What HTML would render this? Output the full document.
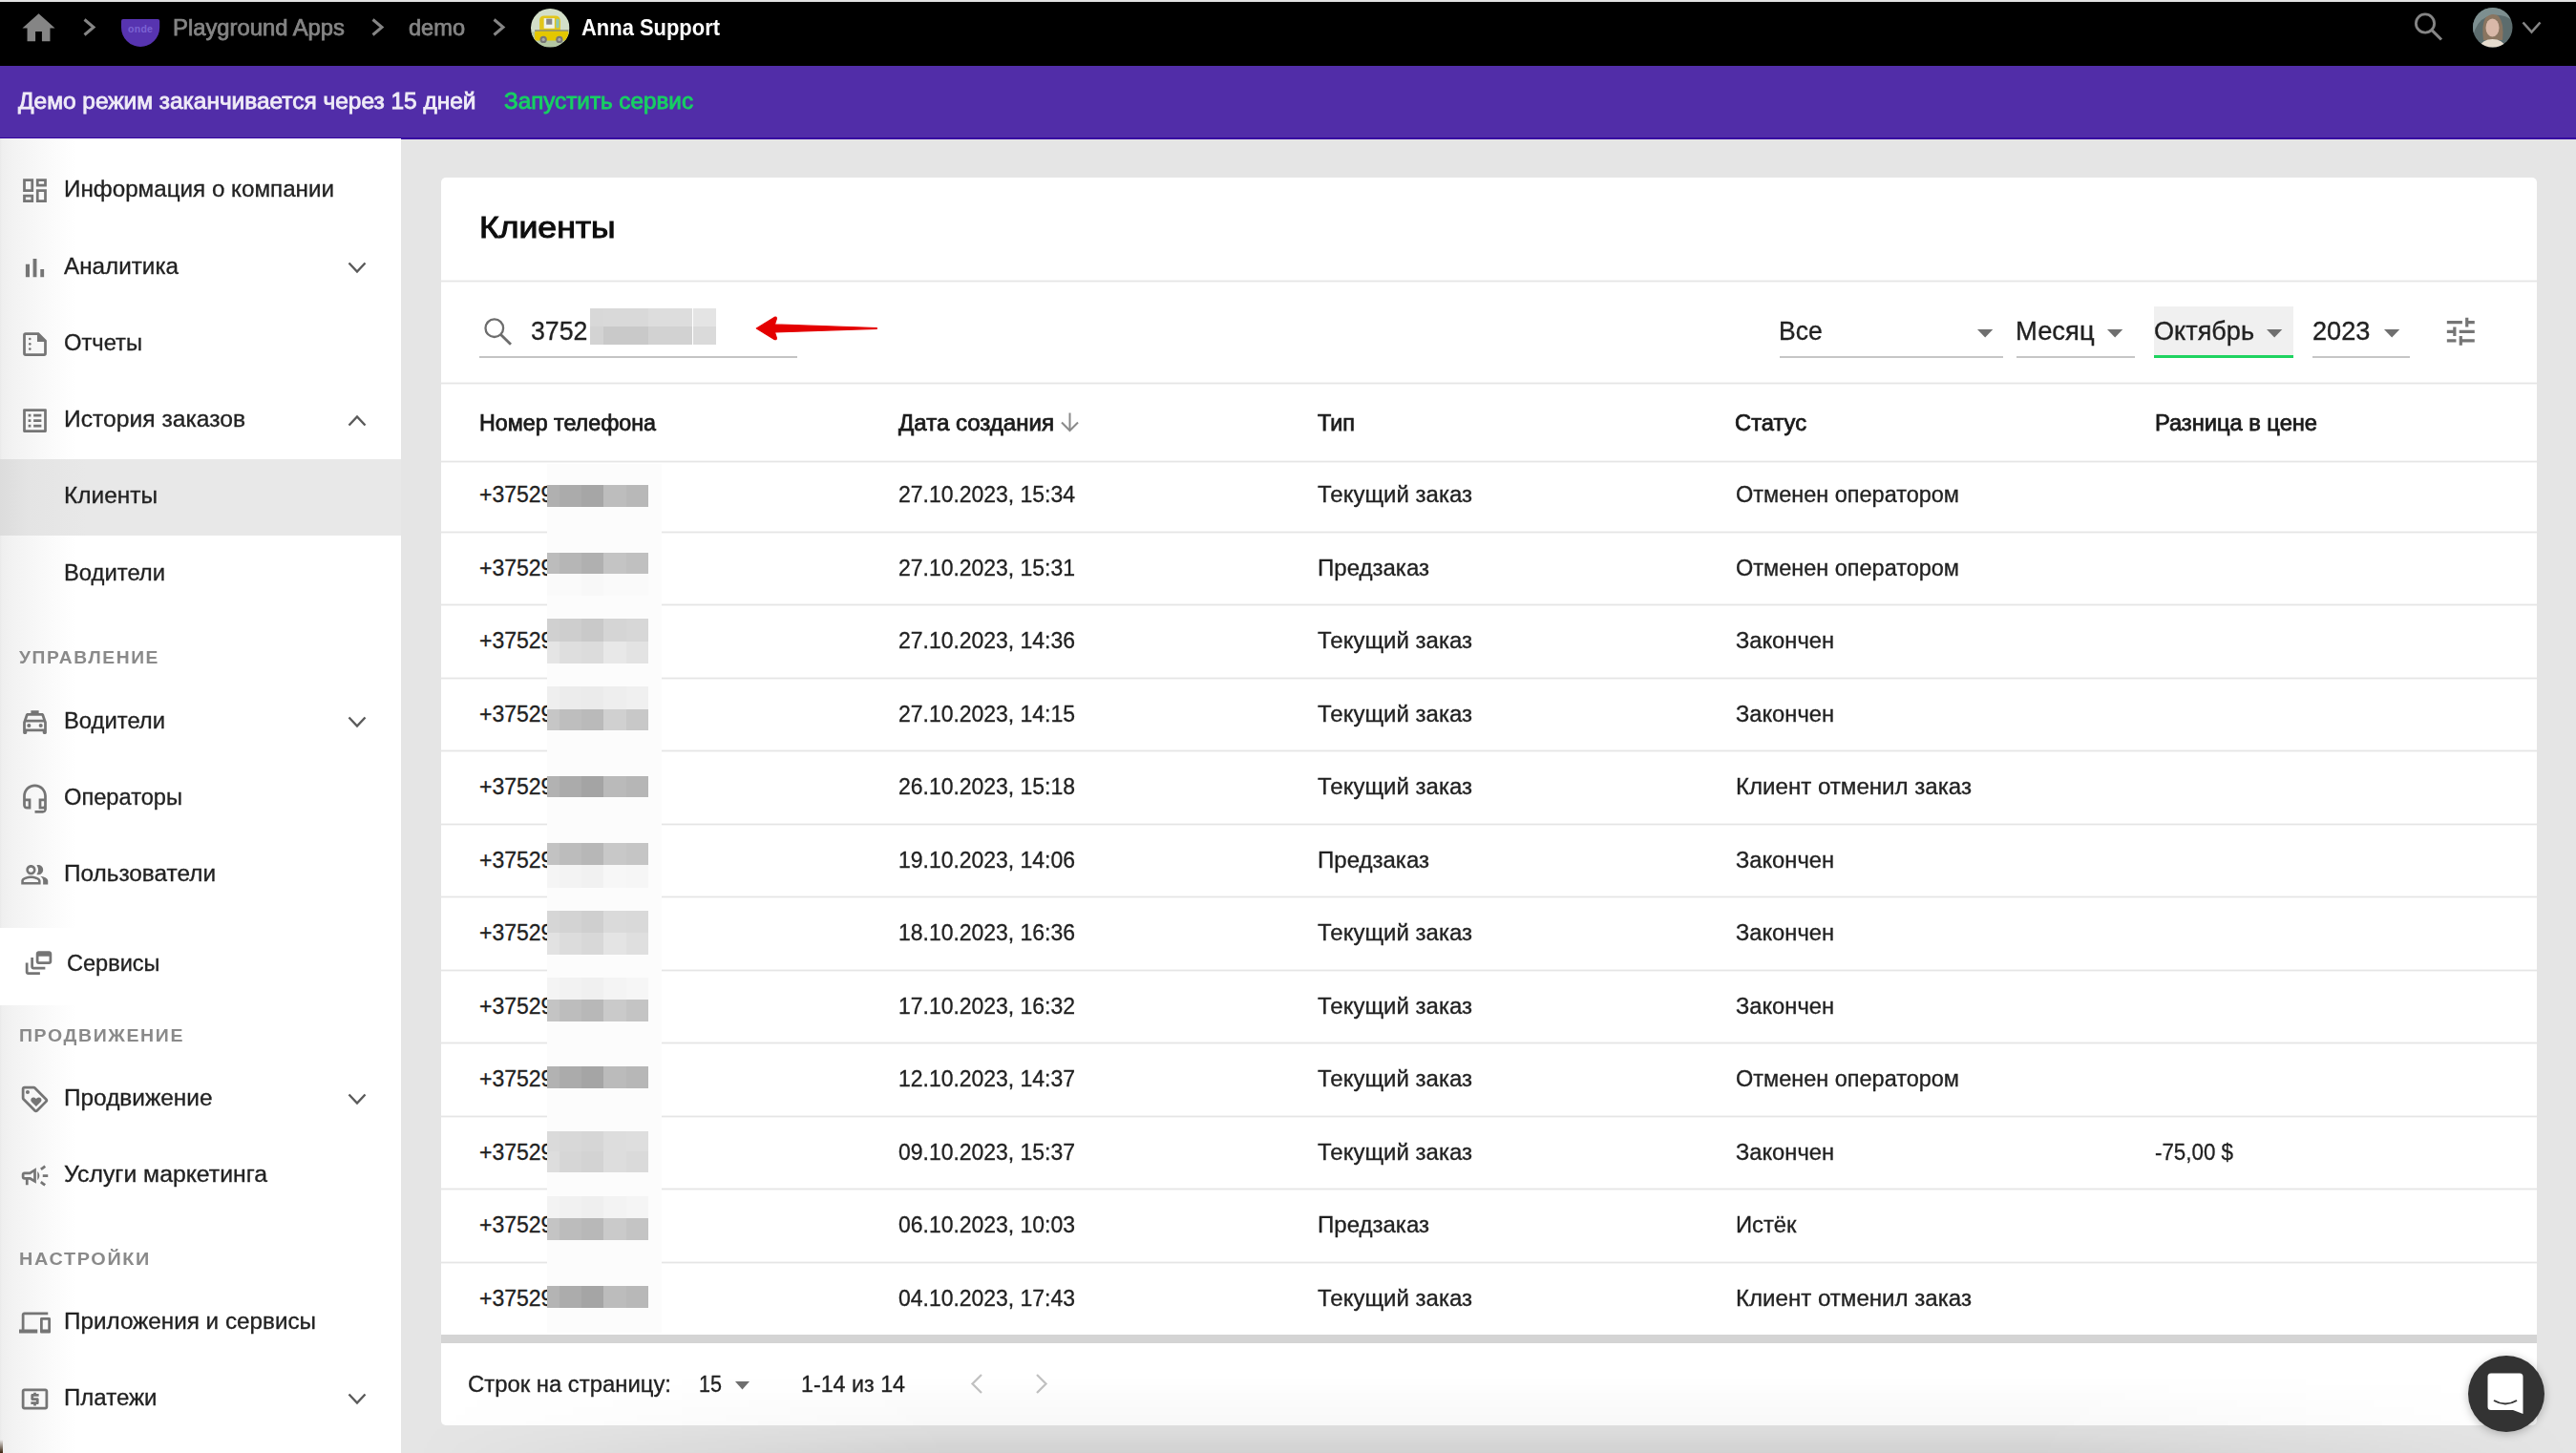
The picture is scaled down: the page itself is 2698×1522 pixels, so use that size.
<!DOCTYPE html>
<html><head><meta charset="utf-8"><style>
html,body{margin:0;padding:0;}
body{width:2698px;height:1522px;position:relative;overflow:hidden;font-family:"Liberation Sans", sans-serif;background:#e5e5e5;}
.t{position:absolute;white-space:nowrap;line-height:1;transform-origin:0 50%;}
.r{position:absolute;}
svg.r{overflow:visible;}
</style></head><body>
<div class="r" style="left:0px;top:0px;width:2698px;height:1522px;background:#e5e5e5;"></div>
<div class="r" style="left:0px;top:0px;width:2698px;height:2px;background:#e2e2e2;"></div>
<div class="r" style="left:0px;top:2px;width:2698px;height:66.5px;background:#000;"></div>
<div class="r" style="left:0px;top:68.5px;width:2698px;height:76px;background:#512da8;"></div>
<div class="r" style="left:0px;top:143.5px;width:2698px;height:2px;background:#3606a0;"></div>
<div class="r" style="left:0px;top:145px;width:420px;height:1377px;background:linear-gradient(to right,#e9e9e9 0px,#efefef 2px,#f2f2f2 12px,#f6f6f6 30px,#fbfbfb 55px,#fff 80px);"></div>
<svg class="r" style="left:19.5px;top:9px;" width="41" height="41" viewBox="0 0 24 24"><path fill="#858585" d="M10 20v-6h4v6h5v-8h3L12 3 2 12h3v8z"/></svg>
<svg class="r" style="left:87px;top:19px;" width="13" height="19" viewBox="0 0 13 19"><polyline points="1.5,1.5 11,9.5 1.5,17.5" fill="none" stroke="#858585" stroke-width="3"/></svg>
<svg class="r" style="left:127.2px;top:20.3px;" width="40.2" height="29" viewBox="0 0 40.2 29"><path d="M0 2 Q0 0 2 0 H38.2 Q40.2 0 40.2 2 V8.8 A20.1 20.1 0 0 1 0 8.8 Z" fill="#5734b0"/><text x="20.1" y="13.8" font-size="10.5" font-weight="700" fill="#7b62d2" text-anchor="middle" font-family="Liberation Sans" letter-spacing="0.3">onde</text></svg>
<div class="t" id="t1" style="left:181.00px;top:16.58px;font-size:24px;color:#858585;font-weight:400;-webkit-text-stroke:0.75px #858585;transform:scaleX(0.9919);">Playground Apps</div>
<svg class="r" style="left:389px;top:19px;" width="13" height="19" viewBox="0 0 13 19"><polyline points="1.5,1.5 11,9.5 1.5,17.5" fill="none" stroke="#858585" stroke-width="3"/></svg>
<div class="t" id="t2" style="left:428.00px;top:16.58px;font-size:24px;color:#858585;font-weight:400;-webkit-text-stroke:0.75px #858585;transform:scaleX(0.9826);">demo</div>
<svg class="r" style="left:516px;top:19px;" width="13" height="19" viewBox="0 0 13 19"><polyline points="1.5,1.5 11,9.5 1.5,17.5" fill="none" stroke="#858585" stroke-width="3"/></svg>
<svg class="r" style="left:555.5px;top:8.5px;" width="40.5" height="40.5" viewBox="0 0 40 40"><defs><clipPath id="anc"><circle cx="20" cy="20" r="20"/></clipPath></defs><g clip-path="url(#anc)"><rect width="40" height="40" fill="#d3dfc8"/><rect y="24" width="40" height="16" fill="#b3c6a3"/><path d="M9 23 V12 Q9 7.5 14 7.5 H25 Q30.5 7.5 30.5 13 V23 Z" fill="#e2c619"/><rect x="13.5" y="10" width="11" height="10.5" fill="#eef3ea"/><rect x="16" y="10.5" width="6" height="6" fill="#888"/><rect x="26" y="10.5" width="3.3" height="9.5" rx="1" fill="#8cc7b4"/><rect x="4" y="22" width="35" height="1.6" fill="#8a8a70"/><rect x="4" y="23.5" width="35" height="9.5" rx="1.5" fill="#e4c700"/><circle cx="13" cy="32" r="3.6" fill="#777"/><circle cx="29.5" cy="32" r="3.6" fill="#777"/><circle cx="13" cy="32" r="1.6" fill="#aaa"/><circle cx="29.5" cy="32" r="1.6" fill="#aaa"/></g></svg>
<div class="t" id="t3" style="left:609.00px;top:16.58px;font-size:24px;color:#fff;font-weight:700;transform:scaleX(0.9139);">Anna Support</div>
<svg class="r" style="left:2520px;top:5px;" width="42" height="42" viewBox="0 0 42 42"><circle cx="20" cy="19.5" r="9.6" fill="none" stroke="#858585" stroke-width="2.8"/><line x1="26.8" y1="26.3" x2="37" y2="36.5" stroke="#858585" stroke-width="3.1"/></svg>
<svg class="r" style="left:2590px;top:8px;" width="41.5" height="41.5" viewBox="0 0 41.5 41.5"><defs><clipPath id="avc"><circle cx="20.75" cy="20.75" r="20.75"/></clipPath></defs><g clip-path="url(#avc)"><rect width="42" height="42" fill="#5c6c6d"/><path d="M0 0 H42 V14 Q30 4 14 10 Q4 14 0 30 Z" fill="#7d8f90"/><path d="M11 34 Q9 18 13 11 Q20 4 27 9 Q33 16 31 34 Z" fill="#8a7560"/><ellipse cx="20.5" cy="21" rx="7" ry="9.5" fill="#d9b8a8"/><path d="M6 42 Q10 33 20.5 33 Q31 33 35 42 Z" fill="#e6dccf"/></g></svg>
<svg class="r" style="left:2641px;top:22px;" width="21" height="14" viewBox="0 0 21 14"><polyline points="1.5,1.5 10.5,11.5 19.5,1.5" fill="none" stroke="#858585" stroke-width="2.6"/></svg>
<div class="r" style="left:0;top:1508px;width:2.5px;height:14px;background:linear-gradient(to bottom,rgba(60,35,10,0),#3a2410);"></div>
<div class="t" id="t4" style="left:19.40px;top:94.15px;font-size:23.8px;color:#efebf7;font-weight:400;-webkit-text-stroke:0.85px #efebf7;transform:scaleX(1.0267);">Демо режим заканчивается через 15 дней</div>
<div class="t" id="t5" style="left:527.50px;top:94.35px;font-size:23.8px;color:#17d162;font-weight:400;-webkit-text-stroke:0.85px #17d162;transform:scaleX(1.0189);">Запустить сервис</div>
<div class="r" style="left:0px;top:481px;width:420px;height:80px;background:linear-gradient(to right,#dcdcdc 0px,#e4e4e4 30px,#e8e8e8 90px);"></div>
<div class="r" style="left:0px;top:971.5px;width:420px;height:81px;background:#ffffff;"></div>
<div class="t" id="t6" style="left:67.00px;top:187.23px;font-size:23px;color:#212121;font-weight:400;-webkit-text-stroke:0.3px #212121;transform:scaleX(1.0522);">Информация о компании</div>
<svg class="r" style="left:20.0px;top:183.0px;" width="33" height="33" viewBox="0 0 24 24"><g fill="#757575"><path d="M19 5v2h-4V5h4M9 5v6H5V5h4m10 8v6h-4v-6h4M9 17v2H5v-2h4M21 3h-8v6h8V3zM11 3H3v10h8V3zm10 8h-8v10h8V11zm-10 4H3v6h8v-6z"/></g></svg>
<div class="t" id="t7" style="left:67.00px;top:267.73px;font-size:23px;color:#212121;font-weight:400;-webkit-text-stroke:0.3px #212121;transform:scaleX(1.0541);">Аналитика</div>
<svg class="r" style="left:20.0px;top:263.5px;" width="33" height="33" viewBox="0 0 24 24"><g fill="#757575"><path d="M5 9.2h3V19H5zM10.6 5h2.8v14h-2.8zm5.6 8H19v6h-2.8z"/></g></svg>
<svg class="r" style="left:364px;top:273.5px;" width="20" height="13" viewBox="0 0 20 13"><polyline points="1.5,1.5 10,10.5 18.5,1.5" fill="none" stroke="#5a5a5a" stroke-width="2.4"/></svg>
<div class="t" id="t8" style="left:67.00px;top:348.23px;font-size:23px;color:#212121;font-weight:400;-webkit-text-stroke:0.3px #212121;transform:scaleX(1.0312);">Отчеты</div>
<svg class="r" style="left:20.0px;top:344.0px;" width="33" height="33" viewBox="0 0 24 24"><g fill="#757575"><path fill-rule="evenodd" d="M5 3 H15 L21 9 V19 Q21 21 19 21 H5 Q3 21 3 19 V5 Q3 3 5 3 Z M5 5 V19 H19 V10.2 H13.8 V5 Z"/><circle cx="8.2" cy="8" r="0.95"/><circle cx="8.2" cy="11.9" r="0.95"/><circle cx="8.2" cy="15.7" r="0.95"/></g></svg>
<div class="t" id="t9" style="left:67.00px;top:428.23px;font-size:23px;color:#212121;font-weight:400;-webkit-text-stroke:0.3px #212121;transform:scaleX(1.0715);">История заказов</div>
<svg class="r" style="left:20.0px;top:424.0px;" width="33" height="33" viewBox="0 0 24 24"><g fill="#757575"><path d="M11 7h6v2h-6zm0 4h6v2h-6zm0 4h6v2h-6zM7 7h2v2H7zm0 4h2v2H7zm0 4h2v2H7zM20.1 3H3.9c-.5 0-.9.4-.9.9v16.2c0 .4.4.9.9.9h16.2c.4 0 .9-.5.9-.9V3.9c0-.5-.5-.9-.9-.9zM19 19H5V5h14v14z"/></g></svg>
<svg class="r" style="left:364px;top:434px;" width="20" height="13" viewBox="0 0 20 13"><polyline points="1.5,11.5 10,2.5 18.5,11.5" fill="none" stroke="#5a5a5a" stroke-width="2.4"/></svg>
<div class="t" id="t10" style="left:67.00px;top:508.23px;font-size:23px;color:#212121;font-weight:400;-webkit-text-stroke:0.3px #212121;transform:scaleX(1.0625);">Клиенты</div>
<div class="t" id="t11" style="left:67.00px;top:588.73px;font-size:23px;color:#212121;font-weight:400;-webkit-text-stroke:0.3px #212121;transform:scaleX(1.0345);">Водители</div>
<div class="t" id="t12" style="left:67.00px;top:744.03px;font-size:23px;color:#212121;font-weight:400;-webkit-text-stroke:0.3px #212121;transform:scaleX(1.0345);">Водители</div>
<svg class="r" style="left:20.0px;top:739.8px;" width="33" height="33" viewBox="0 0 24 24"><g fill="#757575"><path d="M18.92 6.01C18.72 5.42 18.16 5 17.5 5H15V3H9v2H6.5c-.66 0-1.21.42-1.42 1.01L3 12v8c0 .55.45 1 1 1h1c.55 0 1-.45 1-1v-1h12v1c0 .55.45 1 1 1h1c.55 0 1-.45 1-1v-8l-2.08-5.99zM6.85 7h10.29l1.04 3H5.81l1.04-3zM19 17H5v-4.66l.12-.34h13.77l.11.34V17z"/><circle cx="7.5" cy="14.5" r="1.5"/><circle cx="16.5" cy="14.5" r="1.5"/></g></svg>
<svg class="r" style="left:364px;top:749.8px;" width="20" height="13" viewBox="0 0 20 13"><polyline points="1.5,1.5 10,10.5 18.5,1.5" fill="none" stroke="#5a5a5a" stroke-width="2.4"/></svg>
<div class="t" id="t13" style="left:67.00px;top:824.03px;font-size:23px;color:#212121;font-weight:400;-webkit-text-stroke:0.3px #212121;transform:scaleX(1.0281);">Операторы</div>
<svg class="r" style="left:20.0px;top:819.8px;" width="33" height="33" viewBox="0 0 24 24"><g fill="#757575"><path d="M12 1c-4.97 0-9 4.03-9 9v7c0 1.66 1.34 3 3 3h3v-8H5v-2c0-3.87 3.13-7 7-7s7 3.13 7 7v2h-4v8h4v1h-7v2h6c1.66 0 3-1.34 3-3V10c0-4.97-4.03-9-9-9zM7 14v4H6c-.55 0-1-.45-1-1v-3h2zm12 3c0 .55-.45 1-1 1h-1v-4h2v3z"/></g></svg>
<div class="t" id="t14" style="left:67.00px;top:904.23px;font-size:23px;color:#212121;font-weight:400;-webkit-text-stroke:0.3px #212121;transform:scaleX(1.0591);">Пользователи</div>
<svg class="r" style="left:21.4px;top:901.3px;" width="30.5" height="30.5" viewBox="0 0 24 24"><g fill="#757575"><path d="M16.67 13.13C18.04 14.06 19 15.32 19 17v3h4v-3c0-2.18-3.57-3.47-6.33-3.87zM15 12c2.21 0 4-1.79 4-4s-1.79-4-4-4c-.47 0-.91.1-1.33.24C14.5 5.27 15 6.58 15 8s-.5 2.73-1.33 3.76c.42.14.86.24 1.33.24zM9 12c2.21 0 4-1.79 4-4s-1.79-4-4-4-4 1.79-4 4 1.79 4 4 4zm0-6c1.1 0 2 .9 2 2s-.9 2-2 2-2-.9-2-2 .9-2 2-2zM9 13c-2.67 0-8 1.34-8 4v3h16v-3c0-2.66-5.33-4-8-4zm6 5H3v-.99C3.2 16.29 6.3 15 9 15s5.8 1.29 6 2v1z"/></g></svg>
<div class="t" id="t15" style="left:70.00px;top:997.93px;font-size:23px;color:#212121;font-weight:400;-webkit-text-stroke:0.3px #212121;transform:scaleX(1.0231);">Сервисы</div>
<svg class="r" style="left:24.0px;top:992.2px;" width="33" height="33" viewBox="0 0 24 24"><g fill="#757575"><path d="M8 8H6v7c0 1.1.9 2 2 2h9v-2H8V8z"/><path d="M20 3h-8c-1.1 0-2 .9-2 2v6c0 1.1.9 2 2 2h8c1.1 0 2-.9 2-2V5c0-1.1-.9-2-2-2zm0 8h-8V7h8v4zM4 12H2v7c0 1.1.9 2 2 2h9v-2H4v-7z"/></g></svg>
<div class="t" id="t16" style="left:67.00px;top:1139.23px;font-size:23px;color:#212121;font-weight:400;-webkit-text-stroke:0.3px #212121;transform:scaleX(1.0605);">Продвижение</div>
<svg class="r" style="left:20.0px;top:1135.0px;" width="33" height="33" viewBox="0 0 24 24"><g fill="#757575"><path d="M21.41 11.41l-8.83-8.83c-.37-.37-.88-.58-1.41-.58H4c-1.1 0-2 .9-2 2v7.17c0 .53.21 1.04.59 1.41l8.83 8.83c.78.78 2.05.78 2.83 0l7.17-7.17c.78-.78.78-2.04-.01-2.83zM12.83 20L4 11.17V4h7.17L20 12.83 12.83 20z"/><circle cx="6.5" cy="6.5" r="1.5"/><path d="M8.9 12.55c0 .57.23 1.07.6 1.45l3.5 3.5 3.5-3.5c.37-.37.6-.89.6-1.45 0-1.13-.92-2.05-2.05-2.05-.57 0-1.08.23-1.45.6l-.6.6-.6-.59c-.37-.38-.89-.61-1.45-.61-1.13 0-2.05.92-2.05 2.05z"/></g></svg>
<svg class="r" style="left:364px;top:1145px;" width="20" height="13" viewBox="0 0 20 13"><polyline points="1.5,1.5 10,10.5 18.5,1.5" fill="none" stroke="#5a5a5a" stroke-width="2.4"/></svg>
<div class="t" id="t17" style="left:67.00px;top:1219.23px;font-size:23px;color:#212121;font-weight:400;-webkit-text-stroke:0.3px #212121;transform:scaleX(1.0778);">Услуги маркетинга</div>
<svg class="r" style="left:20.0px;top:1215.0px;" width="33" height="33" viewBox="0 0 24 24"><g fill="#757575"><path d="M18 11v2h4v-2h-4zm-2 6.61c.96.71 2.21 1.65 3.2 2.39.4-.53.8-1.07 1.2-1.6-.99-.74-2.24-1.68-3.2-2.4-.4.54-.8 1.08-1.2 1.61zM20.4 5.6c-.4-.53-.8-1.07-1.2-1.6-.99.74-2.24 1.68-3.2 2.4.4.53.8 1.07 1.2 1.6.96-.72 2.21-1.65 3.2-2.4zM4 9c-1.1 0-2 .9-2 2v2c0 1.1.9 2 2 2h1v4h2v-4h1l5 3V6L8 9H4zm5.03 1.71L11 9.53v4.94l-1.97-1.18-.48-.29H4v-2h4.55l.48-.29zM15.5 12c0-1.33-.58-2.53-1.5-3.35v6.69c.92-.81 1.5-2.01 1.5-3.34z"/></g></svg>
<div class="t" id="t18" style="left:67.00px;top:1373.23px;font-size:23px;color:#212121;font-weight:400;-webkit-text-stroke:0.3px #212121;transform:scaleX(1.0544);">Приложения и сервисы</div>
<svg class="r" style="left:20.0px;top:1369.0px;" width="33" height="33" viewBox="0 0 24 24"><g fill="#757575"><path d="M4 6h18V4H4c-1.1 0-2 .9-2 2v11H0v3h14v-3H4V6zm19 2h-6c-.55 0-1 .45-1 1v10c0 .55.45 1 1 1h6c.55 0 1-.45 1-1V9c0-.55-.45-1-1-1zm-1 9h-4v-7h4v7z"/></g></svg>
<div class="t" id="t19" style="left:67.00px;top:1453.03px;font-size:23px;color:#212121;font-weight:400;-webkit-text-stroke:0.3px #212121;transform:scaleX(1.0452);">Платежи</div>
<svg class="r" style="left:20.0px;top:1448.8px;" width="33" height="33" viewBox="0 0 24 24"><g fill="#757575"><path d="M11 17h2v-1h1c.55 0 1-.45 1-1v-3c0-.55-.45-1-1-1h-3v-1h4V8h-2V7h-2v1h-1c-.55 0-1 .45-1 1v3c0 .55.45 1 1 1h3v1H9v2h2v1zm9-13H4c-1.11 0-1.99.89-1.99 2L2 18c0 1.11.89 2 2 2h16c1.11 0 2-.89 2-2V6c0-1.11-.89-2-2-2zm0 14H4V6h16v12z"/></g></svg>
<svg class="r" style="left:364px;top:1458.8px;" width="20" height="13" viewBox="0 0 20 13"><polyline points="1.5,1.5 10,10.5 18.5,1.5" fill="none" stroke="#5a5a5a" stroke-width="2.4"/></svg>
<div class="t" id="t20" style="left:20.00px;top:680.36px;font-size:18px;color:#8a8a8a;font-weight:700;letter-spacing:1.5px;transform:scaleX(1.0676);">УПРАВЛЕНИЕ</div>
<div class="t" id="t21" style="left:20.00px;top:1075.76px;font-size:18px;color:#8a8a8a;font-weight:700;letter-spacing:1.5px;transform:scaleX(1.0816);">ПРОДВИЖЕНИЕ</div>
<div class="t" id="t22" style="left:20.00px;top:1309.76px;font-size:18px;color:#8a8a8a;font-weight:700;letter-spacing:1.5px;transform:scaleX(1.1019);">НАСТРОЙКИ</div>
<div class="r" style="left:462px;top:185.5px;width:2195px;height:1307.5px;background:#fff;border-radius:5px;"></div>
<div class="t" id="t23" style="left:501.80px;top:223.26px;font-size:31px;color:#0d0d0d;font-weight:400;-webkit-text-stroke:1.0px #0d0d0d;transform:scaleX(1.1479);">Клиенты</div>
<div class="r" style="left:462px;top:293px;width:2195px;height:3px;background:linear-gradient(to bottom,#f5f5f5 0,#f5f5f5 1px,#e5e5e5 1px,#e5e5e5 2px,#f5f5f5 2px);"></div>
<svg class="r" style="left:500px;top:326px;" width="40" height="40" viewBox="0 0 40 40"><circle cx="17.8" cy="17.7" r="9.3" fill="none" stroke="#6d6d6d" stroke-width="2.3"/><line x1="24.5" y1="24.4" x2="35" y2="34.8" stroke="#6d6d6d" stroke-width="2.8"/></svg>
<div class="t" id="t24" style="left:556.00px;top:332.92px;font-size:27.5px;color:#212121;font-weight:400;-webkit-text-stroke:0.3px #212121;transform:scaleX(0.9724);">3752</div>
<div class="r" style="left:618px;top:322.7px;width:14.299999999999955px;height:19.6px;background:#d8d8d8;"></div>
<div class="r" style="left:618px;top:342.3px;width:14.299999999999955px;height:18.5px;background:#d3d3d3;"></div>
<div class="r" style="left:632.3px;top:322.7px;width:46.90000000000009px;height:19.6px;background:#d9d9d9;"></div>
<div class="r" style="left:632.3px;top:342.3px;width:46.90000000000009px;height:18.5px;background:#c9c9c9;"></div>
<div class="r" style="left:679.2px;top:322.7px;width:46.299999999999955px;height:19.6px;background:#dddddd;"></div>
<div class="r" style="left:679.2px;top:342.3px;width:46.299999999999955px;height:18.5px;background:#d2d2d2;"></div>
<div class="r" style="left:725.5px;top:322.7px;width:24.100000000000023px;height:19.6px;background:#e4e4e4;"></div>
<div class="r" style="left:725.5px;top:342.3px;width:24.100000000000023px;height:18.5px;background:#dadada;"></div>
<div class="r" style="left:502px;top:372.5px;width:333px;height:2px;background:#c4c4c4;"></div>
<svg class="r" style="left:780px;top:320px;" width="150" height="50" viewBox="0 0 150 50"><path d="M12.3 23.9 L31 12.4 Q33.7 11.2 33.3 14 L31.4 19.9 L138.3 23.5 L138.3 24.3 L31.4 27.9 L33.3 33.8 Q33.7 36.6 31 35.4 Z" fill="#e40000" stroke="#e40000" stroke-width="1.2" stroke-linejoin="round"/></svg>
<div class="t" id="t25" style="left:1863.30px;top:332.80px;font-size:28px;color:#212121;font-weight:400;-webkit-text-stroke:0.35px #212121;transform:scaleX(0.9472);">Все</div>
<svg class="r" style="left:2070.5px;top:344.5px;" width="16.3" height="8.6" viewBox="0 0 16.3 8.6"><path d="M0 0 L16.3 0 L8.15 8.6 Z" fill="#6f6f6f"/></svg>
<div class="r" style="left:1864px;top:372.5px;width:234px;height:2px;background:#c6c6c6;"></div>
<div class="t" id="t26" style="left:2111.40px;top:332.80px;font-size:28px;color:#212121;font-weight:400;-webkit-text-stroke:0.35px #212121;transform:scaleX(0.9784);">Месяц</div>
<svg class="r" style="left:2206.8px;top:344.5px;" width="16.3" height="8.6" viewBox="0 0 16.3 8.6"><path d="M0 0 L16.3 0 L8.15 8.6 Z" fill="#6f6f6f"/></svg>
<div class="r" style="left:2112px;top:372.5px;width:124px;height:2px;background:#c6c6c6;"></div>
<div class="r" style="left:2256px;top:321.2px;width:146px;height:52px;background:#f0f0f0;"></div>
<div class="t" id="t27" style="left:2255.80px;top:332.80px;font-size:28px;color:#212121;font-weight:400;-webkit-text-stroke:0.35px #212121;transform:scaleX(0.9675);">Октябрь</div>
<svg class="r" style="left:2373.8px;top:344.5px;" width="16.3" height="8.6" viewBox="0 0 16.3 8.6"><path d="M0 0 L16.3 0 L8.15 8.6 Z" fill="#6f6f6f"/></svg>
<div class="r" style="left:2256px;top:371.5px;width:146px;height:3.5px;background:#1ed35f;"></div>
<div class="t" id="t28" style="left:2421.60px;top:332.80px;font-size:28px;color:#212121;font-weight:400;-webkit-text-stroke:0.35px #212121;transform:scaleX(0.9696);">2023</div>
<svg class="r" style="left:2496.5px;top:344.5px;" width="16.3" height="8.6" viewBox="0 0 16.3 8.6"><path d="M0 0 L16.3 0 L8.15 8.6 Z" fill="#6f6f6f"/></svg>
<div class="r" style="left:2422px;top:372.5px;width:102px;height:2px;background:#c6c6c6;"></div>
<svg class="r" style="left:2558px;top:328px;" width="38.6" height="38.6" viewBox="0 0 24 24"><path fill="#757575" d="M3 17v2h6v-2H3zM3 5v2h10V5H3zm10 16v-2h8v-2h-8v-2h-2v6h2zM7 9v2H3v2h4v2h2V9H7zm14 4v-2H11v2h10zm-6-4h2V7h4V5h-4V3h-2v6z"/></svg>
<div class="r" style="left:462px;top:400px;width:2195px;height:3px;background:linear-gradient(to bottom,#f5f5f5 0,#f5f5f5 1px,#e5e5e5 1px,#e5e5e5 2px,#f5f5f5 2px);"></div>
<div class="t" id="t29" style="left:502.00px;top:432.13px;font-size:23px;color:#1a1a1a;font-weight:400;-webkit-text-stroke:0.75px #1a1a1a;transform:scaleX(1.0114);">Номер телефона</div>
<div class="t" id="t30" style="left:941.00px;top:432.13px;font-size:23px;color:#1a1a1a;font-weight:400;-webkit-text-stroke:0.75px #1a1a1a;transform:scaleX(1.0457);">Дата создания</div>
<svg class="r" style="left:1105px;top:425px;" width="30" height="30" viewBox="0 0 30 30"><line x1="15.5" y1="7.5" x2="15.5" y2="25" stroke="#8a8a8a" stroke-width="2"/><polyline points="7,17.5 15.5,26 24,17.5" fill="none" stroke="#8a8a8a" stroke-width="2.1"/></svg>
<div class="t" id="t31" style="left:1380.00px;top:432.13px;font-size:23px;color:#1a1a1a;font-weight:400;-webkit-text-stroke:0.75px #1a1a1a;transform:scaleX(1.0171);">Тип</div>
<div class="t" id="t32" style="left:1817.40px;top:432.13px;font-size:23px;color:#1a1a1a;font-weight:400;-webkit-text-stroke:0.75px #1a1a1a;transform:scaleX(1.0314);">Статус</div>
<div class="t" id="t33" style="left:2257.00px;top:432.13px;font-size:23px;color:#1a1a1a;font-weight:400;-webkit-text-stroke:0.75px #1a1a1a;transform:scaleX(1.0280);">Разница в цене</div>
<div class="r" style="left:462px;top:482px;width:2195px;height:3px;background:linear-gradient(to bottom,#f5f5f5 0,#f5f5f5 1px,#e5e5e5 1px,#e5e5e5 2px,#f5f5f5 2px);"></div>
<div class="r" style="left:462px;top:556px;width:2195px;height:3px;background:linear-gradient(to bottom,#f5f5f5 0,#f5f5f5 1px,#e5e5e5 1px,#e5e5e5 2px,#f5f5f5 2px);"></div>
<div class="r" style="left:462px;top:632px;width:2195px;height:3px;background:linear-gradient(to bottom,#f5f5f5 0,#f5f5f5 1px,#e5e5e5 1px,#e5e5e5 2px,#f5f5f5 2px);"></div>
<div class="r" style="left:462px;top:709px;width:2195px;height:3px;background:linear-gradient(to bottom,#f5f5f5 0,#f5f5f5 1px,#e5e5e5 1px,#e5e5e5 2px,#f5f5f5 2px);"></div>
<div class="r" style="left:462px;top:785px;width:2195px;height:3px;background:linear-gradient(to bottom,#f5f5f5 0,#f5f5f5 1px,#e5e5e5 1px,#e5e5e5 2px,#f5f5f5 2px);"></div>
<div class="r" style="left:462px;top:862px;width:2195px;height:3px;background:linear-gradient(to bottom,#f5f5f5 0,#f5f5f5 1px,#e5e5e5 1px,#e5e5e5 2px,#f5f5f5 2px);"></div>
<div class="r" style="left:462px;top:938px;width:2195px;height:3px;background:linear-gradient(to bottom,#f5f5f5 0,#f5f5f5 1px,#e5e5e5 1px,#e5e5e5 2px,#f5f5f5 2px);"></div>
<div class="r" style="left:462px;top:1015px;width:2195px;height:3px;background:linear-gradient(to bottom,#f5f5f5 0,#f5f5f5 1px,#e5e5e5 1px,#e5e5e5 2px,#f5f5f5 2px);"></div>
<div class="r" style="left:462px;top:1091px;width:2195px;height:3px;background:linear-gradient(to bottom,#f5f5f5 0,#f5f5f5 1px,#e5e5e5 1px,#e5e5e5 2px,#f5f5f5 2px);"></div>
<div class="r" style="left:462px;top:1168px;width:2195px;height:3px;background:linear-gradient(to bottom,#f5f5f5 0,#f5f5f5 1px,#e5e5e5 1px,#e5e5e5 2px,#f5f5f5 2px);"></div>
<div class="r" style="left:462px;top:1244px;width:2195px;height:3px;background:linear-gradient(to bottom,#f5f5f5 0,#f5f5f5 1px,#e5e5e5 1px,#e5e5e5 2px,#f5f5f5 2px);"></div>
<div class="r" style="left:462px;top:1321px;width:2195px;height:3px;background:linear-gradient(to bottom,#f5f5f5 0,#f5f5f5 1px,#e5e5e5 1px,#e5e5e5 2px,#f5f5f5 2px);"></div>
<div class="t" id="t34" style="left:502.00px;top:507.43px;font-size:23px;color:#212121;font-weight:400;-webkit-text-stroke:0.3px #212121;width:71px;overflow:hidden;">+37529</div>
<div class="t" id="t35" style="left:941.00px;top:507.43px;font-size:23px;color:#212121;font-weight:400;-webkit-text-stroke:0.3px #212121;transform:scaleX(0.9976);">27.10.2023, 15:34</div>
<div class="t" id="t36" style="left:1379.50px;top:507.43px;font-size:23px;color:#212121;font-weight:400;-webkit-text-stroke:0.3px #212121;transform:scaleX(1.0426);">Текущий заказ</div>
<div class="t" id="t37" style="left:1818.00px;top:507.43px;font-size:23px;color:#212121;font-weight:400;-webkit-text-stroke:0.3px #212121;transform:scaleX(1.0209);">Отменен оператором</div>
<div class="t" id="t38" style="left:502.00px;top:583.93px;font-size:23px;color:#212121;font-weight:400;-webkit-text-stroke:0.3px #212121;width:71px;overflow:hidden;">+37529</div>
<div class="t" id="t39" style="left:941.00px;top:583.93px;font-size:23px;color:#212121;font-weight:400;-webkit-text-stroke:0.3px #212121;transform:scaleX(0.9976);">27.10.2023, 15:31</div>
<div class="t" id="t40" style="left:1379.50px;top:583.93px;font-size:23px;color:#212121;font-weight:400;-webkit-text-stroke:0.3px #212121;transform:scaleX(1.0445);">Предзаказ</div>
<div class="t" id="t41" style="left:1818.00px;top:583.93px;font-size:23px;color:#212121;font-weight:400;-webkit-text-stroke:0.3px #212121;transform:scaleX(1.0209);">Отменен оператором</div>
<div class="t" id="t42" style="left:502.00px;top:660.43px;font-size:23px;color:#212121;font-weight:400;-webkit-text-stroke:0.3px #212121;width:71px;overflow:hidden;">+37529</div>
<div class="t" id="t43" style="left:941.00px;top:660.43px;font-size:23px;color:#212121;font-weight:400;-webkit-text-stroke:0.3px #212121;transform:scaleX(0.9976);">27.10.2023, 14:36</div>
<div class="t" id="t44" style="left:1379.50px;top:660.43px;font-size:23px;color:#212121;font-weight:400;-webkit-text-stroke:0.3px #212121;transform:scaleX(1.0426);">Текущий заказ</div>
<div class="t" id="t45" style="left:1818.00px;top:660.43px;font-size:23px;color:#212121;font-weight:400;-webkit-text-stroke:0.3px #212121;transform:scaleX(1.0302);">Закончен</div>
<div class="t" id="t46" style="left:502.00px;top:736.93px;font-size:23px;color:#212121;font-weight:400;-webkit-text-stroke:0.3px #212121;width:71px;overflow:hidden;">+37529</div>
<div class="t" id="t47" style="left:941.00px;top:736.93px;font-size:23px;color:#212121;font-weight:400;-webkit-text-stroke:0.3px #212121;transform:scaleX(0.9976);">27.10.2023, 14:15</div>
<div class="t" id="t48" style="left:1379.50px;top:736.93px;font-size:23px;color:#212121;font-weight:400;-webkit-text-stroke:0.3px #212121;transform:scaleX(1.0426);">Текущий заказ</div>
<div class="t" id="t49" style="left:1818.00px;top:736.93px;font-size:23px;color:#212121;font-weight:400;-webkit-text-stroke:0.3px #212121;transform:scaleX(1.0302);">Закончен</div>
<div class="t" id="t50" style="left:502.00px;top:813.43px;font-size:23px;color:#212121;font-weight:400;-webkit-text-stroke:0.3px #212121;width:71px;overflow:hidden;">+37529</div>
<div class="t" id="t51" style="left:941.00px;top:813.43px;font-size:23px;color:#212121;font-weight:400;-webkit-text-stroke:0.3px #212121;transform:scaleX(0.9976);">26.10.2023, 15:18</div>
<div class="t" id="t52" style="left:1379.50px;top:813.43px;font-size:23px;color:#212121;font-weight:400;-webkit-text-stroke:0.3px #212121;transform:scaleX(1.0426);">Текущий заказ</div>
<div class="t" id="t53" style="left:1818.00px;top:813.43px;font-size:23px;color:#212121;font-weight:400;-webkit-text-stroke:0.3px #212121;transform:scaleX(1.0472);">Клиент отменил заказ</div>
<div class="t" id="t54" style="left:502.00px;top:889.93px;font-size:23px;color:#212121;font-weight:400;-webkit-text-stroke:0.3px #212121;width:71px;overflow:hidden;">+37529</div>
<div class="t" id="t55" style="left:941.00px;top:889.93px;font-size:23px;color:#212121;font-weight:400;-webkit-text-stroke:0.3px #212121;transform:scaleX(0.9976);">19.10.2023, 14:06</div>
<div class="t" id="t56" style="left:1379.50px;top:889.93px;font-size:23px;color:#212121;font-weight:400;-webkit-text-stroke:0.3px #212121;transform:scaleX(1.0445);">Предзаказ</div>
<div class="t" id="t57" style="left:1818.00px;top:889.93px;font-size:23px;color:#212121;font-weight:400;-webkit-text-stroke:0.3px #212121;transform:scaleX(1.0302);">Закончен</div>
<div class="t" id="t58" style="left:502.00px;top:966.43px;font-size:23px;color:#212121;font-weight:400;-webkit-text-stroke:0.3px #212121;width:71px;overflow:hidden;">+37529</div>
<div class="t" id="t59" style="left:941.00px;top:966.43px;font-size:23px;color:#212121;font-weight:400;-webkit-text-stroke:0.3px #212121;transform:scaleX(0.9976);">18.10.2023, 16:36</div>
<div class="t" id="t60" style="left:1379.50px;top:966.43px;font-size:23px;color:#212121;font-weight:400;-webkit-text-stroke:0.3px #212121;transform:scaleX(1.0426);">Текущий заказ</div>
<div class="t" id="t61" style="left:1818.00px;top:966.43px;font-size:23px;color:#212121;font-weight:400;-webkit-text-stroke:0.3px #212121;transform:scaleX(1.0302);">Закончен</div>
<div class="t" id="t62" style="left:502.00px;top:1042.93px;font-size:23px;color:#212121;font-weight:400;-webkit-text-stroke:0.3px #212121;width:71px;overflow:hidden;">+37529</div>
<div class="t" id="t63" style="left:941.00px;top:1042.93px;font-size:23px;color:#212121;font-weight:400;-webkit-text-stroke:0.3px #212121;transform:scaleX(0.9976);">17.10.2023, 16:32</div>
<div class="t" id="t64" style="left:1379.50px;top:1042.93px;font-size:23px;color:#212121;font-weight:400;-webkit-text-stroke:0.3px #212121;transform:scaleX(1.0426);">Текущий заказ</div>
<div class="t" id="t65" style="left:1818.00px;top:1042.93px;font-size:23px;color:#212121;font-weight:400;-webkit-text-stroke:0.3px #212121;transform:scaleX(1.0302);">Закончен</div>
<div class="t" id="t66" style="left:502.00px;top:1119.43px;font-size:23px;color:#212121;font-weight:400;-webkit-text-stroke:0.3px #212121;width:71px;overflow:hidden;">+37529</div>
<div class="t" id="t67" style="left:941.00px;top:1119.43px;font-size:23px;color:#212121;font-weight:400;-webkit-text-stroke:0.3px #212121;transform:scaleX(0.9976);">12.10.2023, 14:37</div>
<div class="t" id="t68" style="left:1379.50px;top:1119.43px;font-size:23px;color:#212121;font-weight:400;-webkit-text-stroke:0.3px #212121;transform:scaleX(1.0426);">Текущий заказ</div>
<div class="t" id="t69" style="left:1818.00px;top:1119.43px;font-size:23px;color:#212121;font-weight:400;-webkit-text-stroke:0.3px #212121;transform:scaleX(1.0209);">Отменен оператором</div>
<div class="t" id="t70" style="left:502.00px;top:1195.93px;font-size:23px;color:#212121;font-weight:400;-webkit-text-stroke:0.3px #212121;width:71px;overflow:hidden;">+37529</div>
<div class="t" id="t71" style="left:941.00px;top:1195.93px;font-size:23px;color:#212121;font-weight:400;-webkit-text-stroke:0.3px #212121;transform:scaleX(0.9976);">09.10.2023, 15:37</div>
<div class="t" id="t72" style="left:1379.50px;top:1195.93px;font-size:23px;color:#212121;font-weight:400;-webkit-text-stroke:0.3px #212121;transform:scaleX(1.0426);">Текущий заказ</div>
<div class="t" id="t73" style="left:1818.00px;top:1195.93px;font-size:23px;color:#212121;font-weight:400;-webkit-text-stroke:0.3px #212121;transform:scaleX(1.0302);">Закончен</div>
<div class="t" id="t74" style="left:2257.00px;top:1195.93px;font-size:23px;color:#212121;font-weight:400;-webkit-text-stroke:0.3px #212121;transform:scaleX(0.9715);">-75,00 $</div>
<div class="t" id="t75" style="left:502.00px;top:1272.43px;font-size:23px;color:#212121;font-weight:400;-webkit-text-stroke:0.3px #212121;width:71px;overflow:hidden;">+37529</div>
<div class="t" id="t76" style="left:941.00px;top:1272.43px;font-size:23px;color:#212121;font-weight:400;-webkit-text-stroke:0.3px #212121;transform:scaleX(0.9976);">06.10.2023, 10:03</div>
<div class="t" id="t77" style="left:1379.50px;top:1272.43px;font-size:23px;color:#212121;font-weight:400;-webkit-text-stroke:0.3px #212121;transform:scaleX(1.0445);">Предзаказ</div>
<div class="t" id="t78" style="left:1818.00px;top:1272.43px;font-size:23px;color:#212121;font-weight:400;-webkit-text-stroke:0.3px #212121;transform:scaleX(1.0338);">Истёк</div>
<div class="t" id="t79" style="left:502.00px;top:1348.93px;font-size:23px;color:#212121;font-weight:400;-webkit-text-stroke:0.3px #212121;width:71px;overflow:hidden;">+37529</div>
<div class="t" id="t80" style="left:941.00px;top:1348.93px;font-size:23px;color:#212121;font-weight:400;-webkit-text-stroke:0.3px #212121;transform:scaleX(0.9976);">04.10.2023, 17:43</div>
<div class="t" id="t81" style="left:1379.50px;top:1348.93px;font-size:23px;color:#212121;font-weight:400;-webkit-text-stroke:0.3px #212121;transform:scaleX(1.0426);">Текущий заказ</div>
<div class="t" id="t82" style="left:1818.00px;top:1348.93px;font-size:23px;color:#212121;font-weight:400;-webkit-text-stroke:0.3px #212121;transform:scaleX(1.0472);">Клиент отменил заказ</div>
<div class="r" style="left:462px;top:1398px;width:2195px;height:9px;background:#d4d4d4;"></div>
<div class="t" id="t83" style="left:489.60px;top:1438.53px;font-size:23px;color:#212121;font-weight:400;-webkit-text-stroke:0.3px #212121;transform:scaleX(1.0375);">Строк на страницу:</div>
<div class="t" id="t84" style="left:732.00px;top:1438.53px;font-size:23px;color:#212121;font-weight:400;-webkit-text-stroke:0.3px #212121;transform:scaleX(0.9377);">15</div>
<svg class="r" style="left:770px;top:1447px;" width="15" height="8.5" viewBox="0 0 15 8.5"><path d="M0 0 L15 0 L7.5 8.5 Z" fill="#6f6f6f"/></svg>
<div class="t" id="t85" style="left:839.40px;top:1438.53px;font-size:23px;color:#212121;font-weight:400;-webkit-text-stroke:0.3px #212121;transform:scaleX(1.0112);">1-14 из 14</div>
<svg class="r" style="left:1015px;top:1438px;" width="16" height="23" viewBox="0 0 16 23"><polyline points="13,2 3.5,11.5 13,21" fill="none" stroke="#c2c2c2" stroke-width="2.3"/></svg>
<svg class="r" style="left:1083px;top:1438px;" width="16" height="23" viewBox="0 0 16 23"><polyline points="3,2 12.5,11.5 3,21" fill="none" stroke="#c2c2c2" stroke-width="2.3"/></svg>
<div class="r" style="left:430px;top:1440px;width:2268px;height:82px;background:linear-gradient(to bottom,rgba(0,0,0,0) 0px,rgba(0,0,0,0.027) 53px,rgba(0,0,0,0.03) 54px,rgba(0,0,0,0.083) 82px);-webkit-mask-image:linear-gradient(to right,transparent 0%,#000 25%,#000 75%,transparent 100%);"></div>
<div class="r" style="left:2584.5px;top:1420px;width:80px;height:80px;border-radius:50%;background:#333;box-shadow:0 2px 10px rgba(0,0,0,0.25);"></div>
<svg class="r" style="left:2604px;top:1437px;" width="41" height="45" viewBox="0 0 41 45"><path d="M4 1.5 H35 Q38.5 1.5 38.5 5 V44 L28 40 H5 Q1.5 40 1.5 36.5 V5 Q1.5 1.5 5 1.5 Z" fill="#fff"/><path d="M8 30 Q20 37 32 30" fill="none" stroke="#333" stroke-width="2"/></svg>
<div class="r" style="left:572.5px;top:486px;width:120.5px;height:910px;background:#fcfcfc;"></div>
<div class="r" style="left:572.5px;top:508.2px;width:13.0px;height:22.80000000000001px;background:#b0b0b0;"></div>
<div class="r" style="left:585.5px;top:508.2px;width:23.5px;height:22.80000000000001px;background:#ababab;"></div>
<div class="r" style="left:609px;top:508.2px;width:23px;height:22.80000000000001px;background:#a6a6a6;"></div>
<div class="r" style="left:632px;top:508.2px;width:23.799999999999955px;height:22.80000000000001px;background:#bdbdbd;"></div>
<div class="r" style="left:655.8px;top:508.2px;width:23.40000000000009px;height:22.80000000000001px;background:#b8b8b8;"></div>
<div class="r" style="left:572.5px;top:578.7px;width:13.0px;height:22.299999999999955px;background:#bcbcbc;"></div>
<div class="r" style="left:585.5px;top:578.7px;width:23.5px;height:22.299999999999955px;background:#b6b6b6;"></div>
<div class="r" style="left:609px;top:578.7px;width:23px;height:22.299999999999955px;background:#b0b0b0;"></div>
<div class="r" style="left:632px;top:578.7px;width:23.799999999999955px;height:22.299999999999955px;background:#c4c4c4;"></div>
<div class="r" style="left:655.8px;top:578.7px;width:23.40000000000009px;height:22.299999999999955px;background:#c0c0c0;"></div>
<div class="r" style="left:572.5px;top:601px;width:13.0px;height:23px;background:#fafafa;"></div>
<div class="r" style="left:585.5px;top:601px;width:23.5px;height:23px;background:#fafafa;"></div>
<div class="r" style="left:609px;top:601px;width:23px;height:23px;background:#f8f8f8;"></div>
<div class="r" style="left:632px;top:601px;width:23.799999999999955px;height:23px;background:#fafafa;"></div>
<div class="r" style="left:655.8px;top:601px;width:23.40000000000009px;height:23px;background:#fafafa;"></div>
<div class="r" style="left:572.5px;top:648.4px;width:13.0px;height:23.399999999999977px;background:#d0d0d0;"></div>
<div class="r" style="left:585.5px;top:648.4px;width:23.5px;height:23.399999999999977px;background:#cecece;"></div>
<div class="r" style="left:609px;top:648.4px;width:23px;height:23.399999999999977px;background:#c9c9c9;"></div>
<div class="r" style="left:632px;top:648.4px;width:23.799999999999955px;height:23.399999999999977px;background:#d5d5d5;"></div>
<div class="r" style="left:655.8px;top:648.4px;width:23.40000000000009px;height:23.399999999999977px;background:#d7d7d7;"></div>
<div class="r" style="left:572.5px;top:671.8px;width:13.0px;height:23.200000000000045px;background:#e5e5e5;"></div>
<div class="r" style="left:585.5px;top:671.8px;width:23.5px;height:23.200000000000045px;background:#dedede;"></div>
<div class="r" style="left:609px;top:671.8px;width:23px;height:23.200000000000045px;background:#dcdcdc;"></div>
<div class="r" style="left:632px;top:671.8px;width:23.799999999999955px;height:23.200000000000045px;background:#e8e8e8;"></div>
<div class="r" style="left:655.8px;top:671.8px;width:23.40000000000009px;height:23.200000000000045px;background:#e3e3e3;"></div>
<div class="r" style="left:572.5px;top:719px;width:13.0px;height:23.600000000000023px;background:#efefef;"></div>
<div class="r" style="left:585.5px;top:719px;width:23.5px;height:23.600000000000023px;background:#ececec;"></div>
<div class="r" style="left:609px;top:719px;width:23px;height:23.600000000000023px;background:#ebebeb;"></div>
<div class="r" style="left:632px;top:719px;width:23.799999999999955px;height:23.600000000000023px;background:#eeeeee;"></div>
<div class="r" style="left:655.8px;top:719px;width:23.40000000000009px;height:23.600000000000023px;background:#f0f0f0;"></div>
<div class="r" style="left:572.5px;top:742.6px;width:13.0px;height:22.600000000000023px;background:#c6c6c6;"></div>
<div class="r" style="left:585.5px;top:742.6px;width:23.5px;height:22.600000000000023px;background:#bebebe;"></div>
<div class="r" style="left:609px;top:742.6px;width:23px;height:22.600000000000023px;background:#bababa;"></div>
<div class="r" style="left:632px;top:742.6px;width:23.799999999999955px;height:22.600000000000023px;background:#d0d0d0;"></div>
<div class="r" style="left:655.8px;top:742.6px;width:23.40000000000009px;height:22.600000000000023px;background:#c8c8c8;"></div>
<div class="r" style="left:572.5px;top:813px;width:13.0px;height:22.399999999999977px;background:#b2b2b2;"></div>
<div class="r" style="left:585.5px;top:813px;width:23.5px;height:22.399999999999977px;background:#ababab;"></div>
<div class="r" style="left:609px;top:813px;width:23px;height:22.399999999999977px;background:#a4a4a4;"></div>
<div class="r" style="left:632px;top:813px;width:23.799999999999955px;height:22.399999999999977px;background:#bababa;"></div>
<div class="r" style="left:655.8px;top:813px;width:23.40000000000009px;height:22.399999999999977px;background:#b6b6b6;"></div>
<div class="r" style="left:572.5px;top:883px;width:13.0px;height:23px;background:#c2c2c2;"></div>
<div class="r" style="left:585.5px;top:883px;width:23.5px;height:23px;background:#bcbcbc;"></div>
<div class="r" style="left:609px;top:883px;width:23px;height:23px;background:#b7b7b7;"></div>
<div class="r" style="left:632px;top:883px;width:23.799999999999955px;height:23px;background:#c8c8c8;"></div>
<div class="r" style="left:655.8px;top:883px;width:23.40000000000009px;height:23px;background:#c5c5c5;"></div>
<div class="r" style="left:572.5px;top:906px;width:13.0px;height:23.5px;background:#f5f5f5;"></div>
<div class="r" style="left:585.5px;top:906px;width:23.5px;height:23.5px;background:#f3f3f3;"></div>
<div class="r" style="left:609px;top:906px;width:23px;height:23.5px;background:#f1f1f1;"></div>
<div class="r" style="left:632px;top:906px;width:23.799999999999955px;height:23.5px;background:#f7f7f7;"></div>
<div class="r" style="left:655.8px;top:906px;width:23.40000000000009px;height:23.5px;background:#f6f6f6;"></div>
<div class="r" style="left:572.5px;top:953.6px;width:13.0px;height:23.0px;background:#d6d6d6;"></div>
<div class="r" style="left:585.5px;top:953.6px;width:23.5px;height:23.0px;background:#d3d3d3;"></div>
<div class="r" style="left:609px;top:953.6px;width:23px;height:23.0px;background:#cfcfcf;"></div>
<div class="r" style="left:632px;top:953.6px;width:23.799999999999955px;height:23.0px;background:#dadada;"></div>
<div class="r" style="left:655.8px;top:953.6px;width:23.40000000000009px;height:23.0px;background:#d9d9d9;"></div>
<div class="r" style="left:572.5px;top:976.6px;width:13.0px;height:23.100000000000023px;background:#e2e2e2;"></div>
<div class="r" style="left:585.5px;top:976.6px;width:23.5px;height:23.100000000000023px;background:#dcdcdc;"></div>
<div class="r" style="left:609px;top:976.6px;width:23px;height:23.100000000000023px;background:#d8d8d8;"></div>
<div class="r" style="left:632px;top:976.6px;width:23.799999999999955px;height:23.100000000000023px;background:#e4e4e4;"></div>
<div class="r" style="left:655.8px;top:976.6px;width:23.40000000000009px;height:23.100000000000023px;background:#dfdfdf;"></div>
<div class="r" style="left:572.5px;top:1023.8px;width:13.0px;height:23.100000000000136px;background:#f4f4f4;"></div>
<div class="r" style="left:585.5px;top:1023.8px;width:23.5px;height:23.100000000000136px;background:#f2f2f2;"></div>
<div class="r" style="left:609px;top:1023.8px;width:23px;height:23.100000000000136px;background:#f0f0f0;"></div>
<div class="r" style="left:632px;top:1023.8px;width:23.799999999999955px;height:23.100000000000136px;background:#f4f4f4;"></div>
<div class="r" style="left:655.8px;top:1023.8px;width:23.40000000000009px;height:23.100000000000136px;background:#f6f6f6;"></div>
<div class="r" style="left:572.5px;top:1046.9px;width:13.0px;height:23.09999999999991px;background:#c4c4c4;"></div>
<div class="r" style="left:585.5px;top:1046.9px;width:23.5px;height:23.09999999999991px;background:#bdbdbd;"></div>
<div class="r" style="left:609px;top:1046.9px;width:23px;height:23.09999999999991px;background:#b8b8b8;"></div>
<div class="r" style="left:632px;top:1046.9px;width:23.799999999999955px;height:23.09999999999991px;background:#cacaca;"></div>
<div class="r" style="left:655.8px;top:1046.9px;width:23.40000000000009px;height:23.09999999999991px;background:#c4c4c4;"></div>
<div class="r" style="left:572.5px;top:1117.4px;width:13.0px;height:23.09999999999991px;background:#b2b2b2;"></div>
<div class="r" style="left:585.5px;top:1117.4px;width:23.5px;height:23.09999999999991px;background:#ababab;"></div>
<div class="r" style="left:609px;top:1117.4px;width:23px;height:23.09999999999991px;background:#a5a5a5;"></div>
<div class="r" style="left:632px;top:1117.4px;width:23.799999999999955px;height:23.09999999999991px;background:#bbbbbb;"></div>
<div class="r" style="left:655.8px;top:1117.4px;width:23.40000000000009px;height:23.09999999999991px;background:#b7b7b7;"></div>
<div class="r" style="left:572.5px;top:1184.6px;width:13.0px;height:21.40000000000009px;background:#dadada;"></div>
<div class="r" style="left:585.5px;top:1184.6px;width:23.5px;height:21.40000000000009px;background:#d8d8d8;"></div>
<div class="r" style="left:609px;top:1184.6px;width:23px;height:21.40000000000009px;background:#d6d6d6;"></div>
<div class="r" style="left:632px;top:1184.6px;width:23.799999999999955px;height:21.40000000000009px;background:#dddddd;"></div>
<div class="r" style="left:655.8px;top:1184.6px;width:23.40000000000009px;height:21.40000000000009px;background:#dedede;"></div>
<div class="r" style="left:572.5px;top:1206px;width:13.0px;height:22px;background:#dddddd;"></div>
<div class="r" style="left:585.5px;top:1206px;width:23.5px;height:22px;background:#d6d6d6;"></div>
<div class="r" style="left:609px;top:1206px;width:23px;height:22px;background:#d3d3d3;"></div>
<div class="r" style="left:632px;top:1206px;width:23.799999999999955px;height:22px;background:#dddddd;"></div>
<div class="r" style="left:655.8px;top:1206px;width:23.40000000000009px;height:22px;background:#dadada;"></div>
<div class="r" style="left:572.5px;top:1253.3px;width:13.0px;height:22.600000000000136px;background:#f3f3f3;"></div>
<div class="r" style="left:585.5px;top:1253.3px;width:23.5px;height:22.600000000000136px;background:#f1f1f1;"></div>
<div class="r" style="left:609px;top:1253.3px;width:23px;height:22.600000000000136px;background:#efefef;"></div>
<div class="r" style="left:632px;top:1253.3px;width:23.799999999999955px;height:22.600000000000136px;background:#f3f3f3;"></div>
<div class="r" style="left:655.8px;top:1253.3px;width:23.40000000000009px;height:22.600000000000136px;background:#f5f5f5;"></div>
<div class="r" style="left:572.5px;top:1275.9px;width:13.0px;height:23.09999999999991px;background:#c4c4c4;"></div>
<div class="r" style="left:585.5px;top:1275.9px;width:23.5px;height:23.09999999999991px;background:#bcbcbc;"></div>
<div class="r" style="left:609px;top:1275.9px;width:23px;height:23.09999999999991px;background:#b8b8b8;"></div>
<div class="r" style="left:632px;top:1275.9px;width:23.799999999999955px;height:23.09999999999991px;background:#cacaca;"></div>
<div class="r" style="left:655.8px;top:1275.9px;width:23.40000000000009px;height:23.09999999999991px;background:#c4c4c4;"></div>
<div class="r" style="left:572.5px;top:1346.6px;width:13.0px;height:23.100000000000136px;background:#b4b4b4;"></div>
<div class="r" style="left:585.5px;top:1346.6px;width:23.5px;height:23.100000000000136px;background:#acacac;"></div>
<div class="r" style="left:609px;top:1346.6px;width:23px;height:23.100000000000136px;background:#a5a5a5;"></div>
<div class="r" style="left:632px;top:1346.6px;width:23.799999999999955px;height:23.100000000000136px;background:#bcbcbc;"></div>
<div class="r" style="left:655.8px;top:1346.6px;width:23.40000000000009px;height:23.100000000000136px;background:#b8b8b8;"></div>
</body></html>
